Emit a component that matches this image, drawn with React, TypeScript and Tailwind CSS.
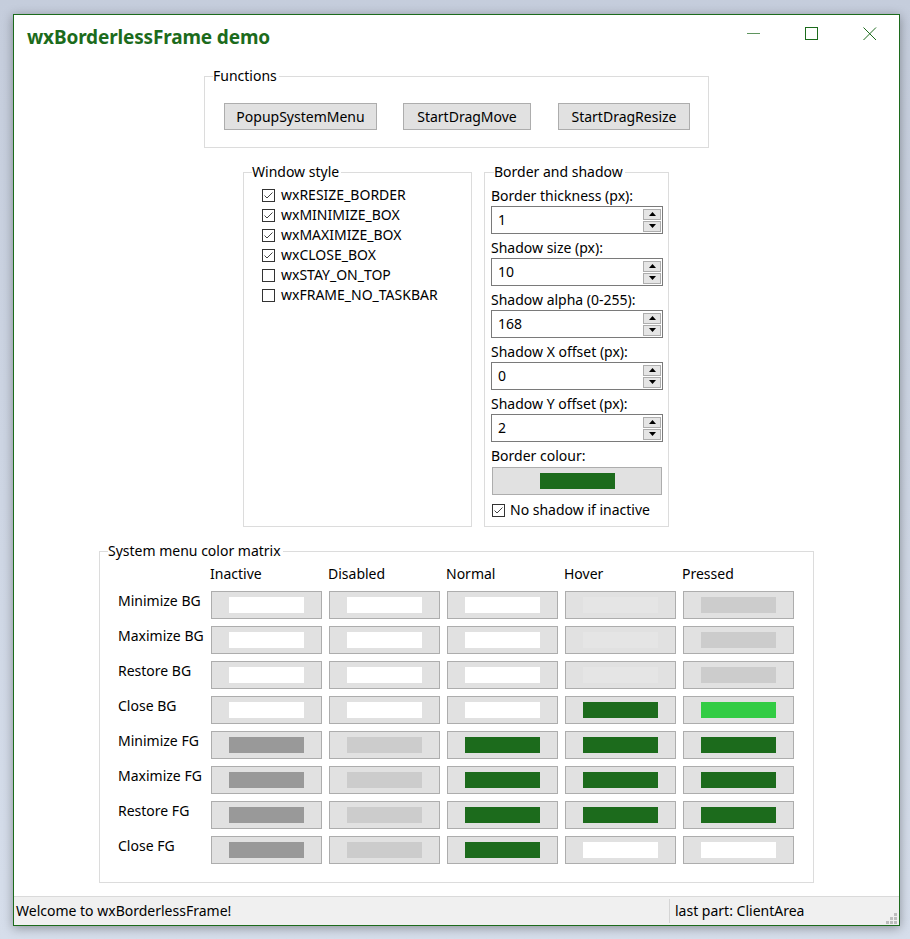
import React from "react";

const GREEN = "#1c6b1c";

function CheckBox({ checked }: { checked: boolean }) {
  return (
    <span className="w-[13px] h-[13px] border border-[#333333] bg-white flex items-center justify-center shrink-0">
      {checked && (
        <svg width="11" height="11" viewBox="0 0 11 11">
          <path d="M1.5 5.5 L4 8 L9.5 2.5" fill="none" stroke="#444444" strokeWidth="1" />
        </svg>
      )}
    </span>
  );
}

function CheckRow({ checked, label }: { checked: boolean; label: string }) {
  return (
    <div className="h-[20px] flex items-center gap-[6px]">
      <CheckBox checked={checked} />
      <span className="leading-[20px]">{label}</span>
    </div>
  );
}

function SpinBtn({ up }: { up: boolean }) {
  return (
    <div className="w-[18px] h-[11px] border border-[#adadad] bg-[#e5e5e5] flex items-center justify-center">
      <svg width="7" height="4" viewBox="0 0 7 4">
        {up ? <path d="M0 4 L3.5 0 L7 4 Z" fill="#000" /> : <path d="M0 0 L3.5 4 L7 0 Z" fill="#000" />}
      </svg>
    </div>
  );
}

function Spin({ label, value }: { label: string; value: string }) {
  return (
    <div className="flex flex-col">
      <div className="h-[20px] leading-[20px]">{label}</div>
      <div className="h-[28px] w-[172px] border border-[#7a7a7a] bg-white flex items-center">
        <span className="flex-1 pl-[6px] leading-[20px]">{value}</span>
        <div className="flex flex-col gap-[1px] mr-[1px]">
          <SpinBtn up />
          <SpinBtn up={false} />
        </div>
      </div>
    </div>
  );
}

function Button({ label, w }: { label: string; w: string }) {
  return (
    <div className={`${w} h-[27px] border border-[#adadad] bg-[#e1e1e1] flex items-center justify-center leading-[20px]`}>
      {label}
    </div>
  );
}

function Cell({ color }: { color: string }) {
  return (
    <div className="h-[28px] border border-[#adadad] bg-[#e1e1e1] flex items-center justify-center">
      <div className="w-[75px] h-[16px]" style={{ background: color }} />
    </div>
  );
}

const W = "#ffffff";
const HOV = "#e5e5e5";
const PRS = "#cccccc";
const INA = "#999999";
const DIS = "#cccccc";
const BRIGHT = "#33cc44";

const rows: { label: string; colors: string[] }[] = [
  { label: "Minimize BG", colors: [W, W, W, HOV, PRS] },
  { label: "Maximize BG", colors: [W, W, W, HOV, PRS] },
  { label: "Restore BG", colors: [W, W, W, HOV, PRS] },
  { label: "Close BG", colors: [W, W, W, GREEN, BRIGHT] },
  { label: "Minimize FG", colors: [INA, DIS, GREEN, GREEN, GREEN] },
  { label: "Maximize FG", colors: [INA, DIS, GREEN, GREEN, GREEN] },
  { label: "Restore FG", colors: [INA, DIS, GREEN, GREEN, GREEN] },
  { label: "Close FG", colors: [INA, DIS, GREEN, W, W] },
];

export default function App() {
  return (
    <div className="w-[910px] h-[939px] bg-gradient-to-b from-[#c5cddc] to-[#d6deeb] pt-[14px] pl-[13px] font-['Noto_Sans',sans-serif] text-[14px] text-black overflow-hidden">
      <div className="w-[887px] h-[912px] border border-[#1c6b1c] bg-white flex flex-col shadow-[0_2px_10px_rgba(0,0,0,0.35)]">
        {/* title bar */}
        <div className="h-[52px] flex items-start shrink-0">
          <div className="pl-[13px] pt-[9px] text-[19px] font-bold leading-[26px] text-[#1c6b1c] tracking-[-0.15px]">
            wxBorderlessFrame demo
          </div>
          <div className="ml-auto flex items-start pt-[12px]">
            <div className="w-[58px] h-[14px] flex items-center justify-center">
              <svg width="14" height="14" viewBox="0 0 14 14">
                <line x1="0" y1="6.5" x2="13" y2="6.5" stroke="#5f955f" strokeWidth="1" />
              </svg>
            </div>
            <div className="w-[58px] h-[14px] flex items-center justify-center">
              <svg width="14" height="14" viewBox="0 0 14 14">
                <rect x="0.5" y="0.5" width="12" height="12" fill="none" stroke="#1c6b1c" strokeWidth="1" />
              </svg>
            </div>
            <div className="w-[58px] h-[14px] flex items-center justify-center">
              <svg width="14" height="14" viewBox="0 0 14 14">
                <path d="M0.5 0.5 L13 13 M13 0.5 L0.5 13" fill="none" stroke="#1c6b1c" strokeWidth="1" />
              </svg>
            </div>
          </div>
        </div>

        {/* content */}
        <div className="flex-1 flex flex-col items-center">
          {/* Functions */}
          <fieldset className="w-[505px] border border-[#dcdcdc] px-[8px] pb-[17px]">
            <legend className="leading-[18px] pr-[2px]">Functions</legend>
            <div className="flex pl-[11px] mt-[18px]">
              <Button label="PopupSystemMenu" w="w-[153px]" />
              <div className="w-[26px]" />
              <Button label="StartDragMove" w="w-[128px]" />
              <div className="w-[27px]" />
              <Button label="StartDragResize" w="w-[132px]" />
            </div>
          </fieldset>

          {/* Window style + Border and shadow */}
          <div className="flex gap-[12px] mt-[15px] mr-[1px]">
            <fieldset className="w-[229px] border border-[#dcdcdc] px-[8px]">
              <legend className="leading-[18px] pr-[2px]">Window style</legend>
              <div className="flex flex-col pl-[10px] mt-[4px]">
                <CheckRow checked label="wxRESIZE_BORDER" />
                <CheckRow checked label="wxMINIMIZE_BOX" />
                <CheckRow checked label="wxMAXIMIZE_BOX" />
                <CheckRow checked label="wxCLOSE_BOX" />
                <CheckRow checked={false} label="wxSTAY_ON_TOP" />
                <CheckRow checked={false} label="wxFRAME_NO_TASKBAR" />
              </div>
            </fieldset>
            <fieldset className="w-[185px] border border-[#dcdcdc] pl-[6px] pr-[5px] pb-[6px]">
              <legend className="leading-[18px] ml-[3px] pr-[2px]">Border and shadow</legend>
              <div className="flex flex-col gap-[4px] mt-[5px]">
                <Spin label="Border thickness (px):" value="1" />
                <Spin label="Shadow size (px):" value="10" />
                <Spin label="Shadow alpha (0-255):" value="168" />
                <Spin label="Shadow X offset (px):" value="0" />
                <Spin label="Shadow Y offset (px):" value="2" />
                <div className="flex flex-col">
                  <div className="h-[20px] leading-[20px]">Border colour:</div>
                  <div className="mt-[1px] ml-[1px] w-[170px] h-[28px] border border-[#adadad] bg-[#e1e1e1] flex items-center justify-center">
                    <div className="w-[75px] h-[16px] bg-[#1c6b1c]" />
                  </div>
                </div>
                <div className="h-[20px] flex items-center gap-[5px] ml-[1px] mt-[1px]">
                  <CheckBox checked />
                  <span className="leading-[20px]">No shadow if inactive</span>
                </div>
              </div>
            </fieldset>
          </div>

          {/* Matrix */}
          <fieldset className="w-[715px] border border-[#dcdcdc] px-[8px] pb-[18px] mt-[15px]">
            <legend className="leading-[18px] pr-[2px]">System menu color matrix</legend>
            <div className="grid grid-cols-[86px_repeat(5,111px)] gap-x-[7px] gap-y-[7px] pl-[10px] mt-[4px]">
              <div className="h-[20px]" />
              {["Inactive", "Disabled", "Normal", "Hover", "Pressed"].map((h) => (
                <div key={h} className="h-[20px] leading-[20px] -ml-[1px]">
                  {h}
                </div>
              ))}
              {rows.map((r) => (
                <React.Fragment key={r.label}>
                  <div className="leading-[20px]">{r.label}</div>
                  {r.colors.map((c, i) => (
                    <Cell key={i} color={c} />
                  ))}
                </React.Fragment>
              ))}
            </div>
          </fieldset>
        </div>

        {/* status bar */}
        <div className="h-[29px] shrink-0 border-t border-[#dadada] bg-[#f0f0f0] flex items-stretch">
          <div className="w-[655px] pl-[2px] flex items-center leading-[20px]">Welcome to wxBorderlessFrame!</div>
          <div className="w-[1px] bg-[#d5d5d5] my-[2px]" />
          <div className="flex-1 pl-[5px] flex items-center leading-[20px]">last part: ClientArea</div>
          <div className="flex items-end pb-[1px] pr-[2px]">
            <svg width="11" height="11" viewBox="0 0 11 11">
              <rect x="8" y="0" width="3" height="3" fill="#bdbdbd" />
              <rect x="4" y="4" width="3" height="3" fill="#bdbdbd" />
              <rect x="8" y="4" width="3" height="3" fill="#bdbdbd" />
              <rect x="0" y="8" width="3" height="3" fill="#bdbdbd" />
              <rect x="4" y="8" width="3" height="3" fill="#bdbdbd" />
              <rect x="8" y="8" width="3" height="3" fill="#bdbdbd" />
            </svg>
          </div>
        </div>
      </div>
    </div>
  );
}
